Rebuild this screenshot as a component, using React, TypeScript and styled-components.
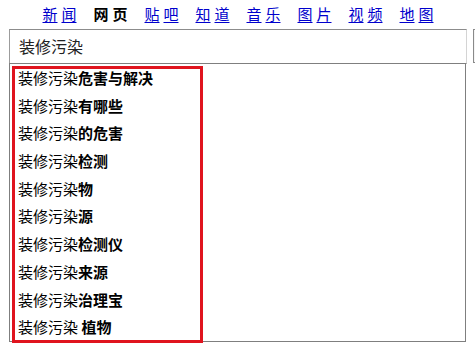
import React from "react";
import styled, { createGlobalStyle } from "styled-components";

const Global = createGlobalStyle`
  html, body { margin: 0; padding: 0; background: #fff; }
  body { font-family: "Noto Sans CJK SC", "Noto Sans", sans-serif; color: #000; }
`;

const Page = styled.div`
  width: 475px;
  height: 348px;
  overflow: hidden;
  position: relative;
`;

const Nav = styled.nav`
  height: 29px;
  display: flex;
  justify-content: center;
  align-items: flex-start;
  gap: 17px;
  padding-top: 5px;
  box-sizing: border-box;
  padding-left: 1px;
`;

const NavItem = styled.a<{ $active?: boolean }>`
  font-size: 15px;
  line-height: 17px;
  width: 34px;
  display: flex;
  justify-content: space-between;
  color: ${(p) => (p.$active ? "#000" : "#0000cc")};
  font-weight: ${(p) => (p.$active ? 700 : 400)};
  text-decoration: ${(p) => (p.$active ? "none" : "underline")};
  text-underline-offset: 2px;
  cursor: pointer;
`;

const SearchRow = styled.div`
  display: flex;
  padding-left: 9px;
  gap: 6px;
`;

const Input = styled.div`
  flex: 0 0 458px;
  height: 35px;
  box-sizing: border-box;
  border-style: solid;
  border-width: 1px;
  border-color: #8c8c8c #d4d4d4 #8c8c8c #9c9c9c;
  font-size: 16px;
  line-height: 33px;
  padding-left: 9px;
  color: #222;
`;

const Button = styled.div`
  flex: 0 0 40px;
  height: 34px;
  box-sizing: border-box;
  border: 1px solid #8a8a8a;
  border-right: none;
  background: #f4f4f4;
`;

const Dropdown = styled.div`
  margin-left: 9px;
  margin-top: -1px;
  width: 457px;
  height: 279px;
  box-sizing: border-box;
  border: 1px solid #7f7f7f;
  position: relative;
`;

const Row = styled.div`
  height: 27.7px;
  line-height: 27.7px;
  font-size: 15px;
  padding-left: 8px;
  white-space: pre;
`;

const Strong = styled.b`
  font-weight: 700;
`;

const Highlight = styled.div`
  position: absolute;
  left: 2px;
  top: 2px;
  width: 191px;
  height: 277px;
  box-sizing: border-box;
  border: 3px solid #e0141e;
  pointer-events: none;
`;

const navs = [
  ["新", "闻"],
  ["网", "页"],
  ["贴", "吧"],
  ["知", "道"],
  ["音", "乐"],
  ["图", "片"],
  ["视", "频"],
  ["地", "图"],
];

const suggestions = [
  "危害与解决",
  "有哪些",
  "的危害",
  "检测",
  "物",
  "源",
  "检测仪",
  "来源",
  "治理宝",
  " 植物",
];

export default function App() {
  return (
    <Page>
      <Global />
      <Nav>
        {navs.map(([a, b], i) => (
          <NavItem key={i} $active={i === 1}>
            <span>{a}</span>
            <span>{b}</span>
          </NavItem>
        ))}
      </Nav>
      <SearchRow>
        <Input>装修污染</Input>
        <Button />
      </SearchRow>
      <Dropdown>
        {suggestions.map((s, i) => (
          <Row key={i}>
            装修污染<Strong>{s}</Strong>
          </Row>
        ))}
        <Highlight />
      </Dropdown>
    </Page>
  );
}
